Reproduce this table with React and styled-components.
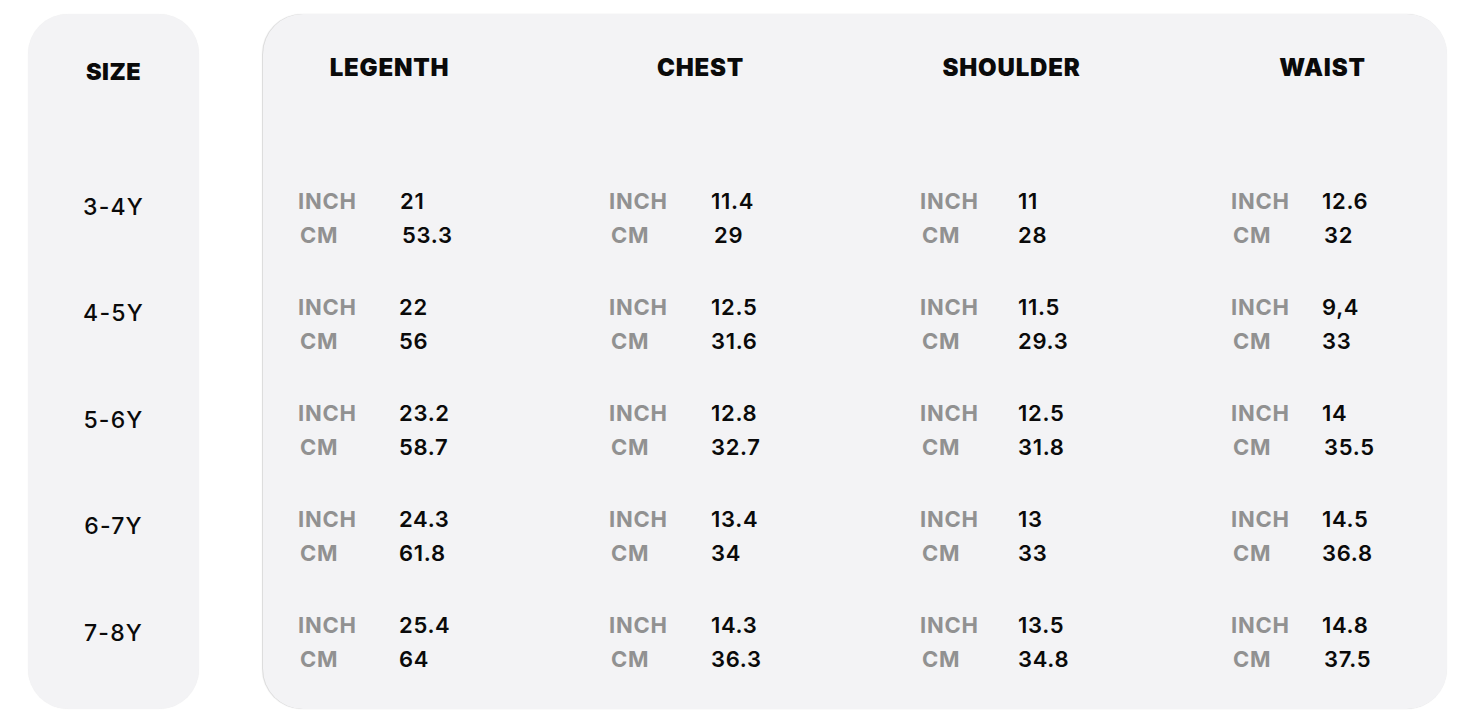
import React from "react";
import styled, { createGlobalStyle } from "styled-components";

const Global = createGlobalStyle`
  html, body { margin: 0; padding: 0; background: #ffffff; }
  body { font-family: Inter, "Noto Sans", "Liberation Sans", sans-serif; color: #0a0a0a; }
`;

const Page = styled.div`
  display: flex;
  gap: 64px;
  padding: 14px 28px;
`;

const Card = styled.div`
  background: #f3f3f5;
  border-radius: 40px;
  height: 695px;
  box-sizing: border-box;
  box-shadow: ${p => (p.$edge ? "-1px 0 1px rgba(0,0,0,0.14), 0 0 1px rgba(0,0,0,0.08)" : "0 0 1px rgba(0,0,0,0.08)")};
`;

const SizeCard = styled(Card)`
  width: 171px;
  display: grid;
  grid-template-rows: 139.5px repeat(5, 106.5px);
  justify-items: center;
`;

const SizeHead = styled.div`
  padding-top: 43px;
  line-height: 30px;
  font-size: 23.5px;
  font-weight: 900;
  letter-spacing: 0.5px;
`;

const SizeLabel = styled.div`
  align-self: center;
  font-size: 23px;
  font-weight: 500;
  letter-spacing: 1.2px;
`;

const TableCard = styled(Card)`
  width: 1184px;
  padding-left: 35px;
  display: grid;
  grid-template-columns: repeat(4, 311px);
  grid-template-rows: 151px repeat(5, 106px);
`;

const ColHead = styled.div`
  width: 183px;
  text-align: center;
  padding-top: 39px;
  line-height: 30px;
  font-size: 24px;
  font-weight: 900;
  letter-spacing: 0.8px;
`;

const Cell = styled.div`
  display: grid;
  grid-template-columns: ${p => p.$lw}px auto;
  grid-auto-rows: 34px;
  align-content: center;
  align-items: center;
  font-size: 22px;
  font-weight: 700;
`;

const Unit = styled.span`
  color: #919191;
  letter-spacing: 0.8px;
  padding-left: ${p => (p.$cm ? 2 : 0)}px;
`;

const Value = styled.span`
  color: #0a0a0a;
  font-weight: 600;
  letter-spacing: 0.7px;
  padding-left: ${p => p.$shift || 0}px;
`;

const sizes = ["3-4Y", "4-5Y", "5-6Y", "6-7Y", "7-8Y"];

const columns = [
  { name: "LEGENTH", lw: 101, rows: [["21", "53.3", 1, 3], ["22", "56"], ["23.2", "58.7"], ["24.3", "61.8"], ["25.4", "64"]] },
  { name: "CHEST", lw: 102, rows: [["11.4", "29", 0, 3], ["12.5", "31.6"], ["12.8", "32.7"], ["13.4", "34"], ["14.3", "36.3"]] },
  { name: "SHOULDER", lw: 98, rows: [["11", "28"], ["11.5", "29.3"], ["12.5", "31.8"], ["13", "33"], ["13.5", "34.8"]] },
  { name: "WAIST", lw: 91, rows: [["12.6", "32", 0, 2], ["9,4", "33"], ["14", "35.5", 0, 2], ["14.5", "36.8"], ["14.8", "37.5", 0, 2]] },
];

export default function App() {
  const cells = [];
  columns.forEach((c, ci) => {
    cells.push(
      <ColHead key={"h" + ci} style={{ gridColumn: ci + 1, gridRow: 1 }}>
        {c.name}
      </ColHead>
    );
    c.rows.forEach((r, ri) => {
      cells.push(
        <Cell key={ci + "-" + ri} $lw={c.lw} style={{ gridColumn: ci + 1, gridRow: ri + 2 }}>
          <Unit>INCH</Unit>
          <Value $shift={r[2]}>{r[0]}</Value>
          <Unit $cm>CM</Unit>
          <Value $shift={r[3]}>{r[1]}</Value>
        </Cell>
      );
    });
  });
  return (
    <>
      <Global />
      <Page>
        <SizeCard>
          <SizeHead>SIZE</SizeHead>
          {sizes.map(s => (
            <SizeLabel key={s}>{s}</SizeLabel>
          ))}
        </SizeCard>
        <TableCard $edge>{cells}</TableCard>
      </Page>
    </>
  );
}
